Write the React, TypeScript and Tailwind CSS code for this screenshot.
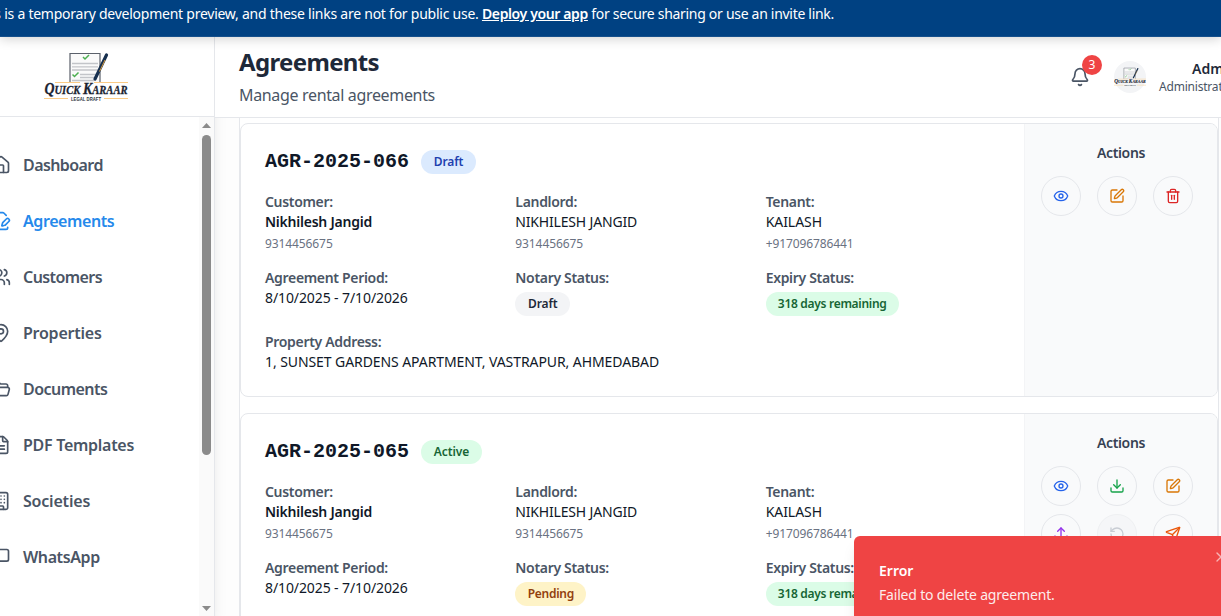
import React from "react";
import {
  House, FilePenLine, Users, MapPin, FolderOpen, FileText, Building, Bell, Eye, SquarePen, Trash2,
  Download, Upload, RotateCcw, Send, X,
} from "lucide-react";

function Logo({ className }: { className: string }) {
  return (
    <svg viewBox="0 0 84 50" className={className} fill="none">
      <path d="M26 30V1.500h30V30" fill="#fafafa" stroke="#5b616b" strokeWidth="1.2" />
      <path d="M28 11.5h26M28 14.8h26M28 18h26M36 22.5h18M36 25.5h16M28 28.5h22" stroke="#c3c5c9" strokeWidth="1.3" />
      <path d="M39 5l2 2 4-4M28.500 22.500l2 2 4-4" stroke="#4caf50" strokeWidth="1.5" />
      <path d="M62.500 3L51 27" stroke="#17304f" strokeWidth="3.200" strokeLinecap="round" />
      <path d="M61 8L55.500 19.500" stroke="#d99a3d" strokeWidth="1" />
      <path d="M11 30.500h25M50 30.500h34M0 46.500h24M60 46.500h24" stroke="#fbcb85" strokeWidth="1.1" />
      <text x="0.500" y="42" textLength="83" lengthAdjust="spacingAndGlyphs" fill="#1b2431" stroke="#1b2431" strokeWidth="0.3" fontFamily="Liberation Serif, serif" fontWeight="700" fontStyle="italic" fontSize="13">
        <tspan fontSize="17">Q</tspan>UICK <tspan fontSize="17">K</tspan>ARAAR
      </text>
      <text x="27" y="49" textLength="30" lengthAdjust="spacingAndGlyphs" fill="#30353d" fontFamily="Liberation Sans, sans-serif" fontWeight="700" fontSize="4.800">LEGAL DRAFT</text>
    </svg>
  );
}

function ChatIcon({ className }: { className?: string }) {
  return (
    <svg viewBox="0 0 24 24" fill="none" stroke="currentColor" strokeWidth="2" strokeLinecap="round" strokeLinejoin="round" className={className}>
      <path d="M21 15a2 2 0 0 1-2 2H7l-4 4V5a2 2 0 0 1 2-2h14a2 2 0 0 1 2 2z" />
    </svg>
  );
}

const nav = [
  { label: "Dashboard", Icon: House, track: "tracking-[-0.58px]" },
  { label: "Agreements", Icon: FilePenLine, track: "tracking-[-0.42px]", active: true },
  { label: "Customers", Icon: Users, track: "tracking-[-0.58px]" },
  { label: "Properties", Icon: MapPin, track: "tracking-[-0.24px]" },
  { label: "Documents", Icon: FolderOpen, track: "tracking-[-0.54px]" },
  { label: "PDF Templates", Icon: FileText, track: "tracking-[-0.28px]" },
  { label: "Societies", Icon: Building, track: "tracking-[-0.2px]" },
  { label: "WhatsApp", Icon: ChatIcon, track: "tracking-[-0.4px]" },
];

function Sidebar() {
  return (
    <aside className="relative z-10 flex w-[215px] shrink-0 flex-col border-r border-gray-200 bg-white shadow-lg">
      <div className="flex h-20 shrink-0 border-b border-gray-200 pl-11 pt-[15px]">
        <Logo className="h-[50px] w-[84px]" />
      </div>
      <div className="flex min-h-0 grow">
        <nav className="flex grow flex-col overflow-hidden pt-5">
          {nav.map(({ label, Icon, track, active }) => (
            <a key={label} className={`-ml-[9px] flex h-14 shrink-0 items-center gap-3 text-base font-semibold ${track} ${active ? "text-[#2589eb]" : "text-gray-600"}`}>
              <Icon className="size-5 shrink-0" />
              {label}
            </a>
          ))}
        </nav>
        <div className="flex w-[15px] flex-col items-center bg-[#fafafa] pb-[5px] pt-1.5">
          <svg className="h-[5px] w-[9px]" viewBox="0 0 9 5"><path d="M4.500 0L9 5H0z" fill="#8b8b8b" /></svg>
          <div className="mt-[7px] h-80 w-[9px] rounded-full bg-[#8b8b8b]" />
          <svg className="mt-auto h-[5px] w-[9px]" viewBox="0 0 9 5"><path d="M4.500 5L9 0H0z" fill="#8b8b8b" /></svg>
        </div>
      </div>
    </aside>
  );
}

function Pill({ className, children }: { className: string; children: React.ReactNode }) {
  return <span className={`flex h-6 items-center justify-center whitespace-nowrap rounded-full text-xs font-semibold ${className}`}>{children}</span>;
}

function Label({ className = "", children }: { className?: string; children: React.ReactNode }) {
  return <div className={`whitespace-nowrap text-sm font-semibold tracking-[-0.32px] text-gray-600 ${className}`}>{children}</div>;
}

type Action = { Icon: React.ElementType; color: string; disabled?: boolean };
type Agreement = { id: string; status: string; statusClass: string; notary: string; notaryClass: string; actions: Action[] };

const agreements: Agreement[] = [
  {
    id: "AGR-2025-066", status: "Draft", statusClass: "w-[55px] tracking-[-0.1px] bg-blue-100 text-[#1e40af]",
    notary: "Draft", notaryClass: "w-[55px] tracking-[-0.1px] bg-gray-100 text-gray-800",
    actions: [
      { Icon: Eye, color: "text-[#2563eb]" },
      { Icon: SquarePen, color: "text-[#d97706]" },
      { Icon: Trash2, color: "text-[#dc2626]" },
    ],
  },
  {
    id: "AGR-2025-065", status: "Active", statusClass: "w-[61px] tracking-[-0.05px] bg-green-100 text-[#166534]",
    notary: "Pending", notaryClass: "w-[71px] tracking-[-0.25px] bg-[#fef3c7] text-[#92400e]",
    actions: [
      { Icon: Eye, color: "text-[#2563eb]" },
      { Icon: Download, color: "text-[#16a34a]" },
      { Icon: SquarePen, color: "text-[#d97706]" },
      { Icon: Upload, color: "text-[#9333ea]" },
      { Icon: RotateCcw, color: "text-gray-400", disabled: true },
      { Icon: Send, color: "text-[#ea580c]" },
    ],
  },
];

function AgreementCard({ a }: { a: Agreement }) {
  return (
    <article className="flex h-[274px] shrink-0 overflow-hidden rounded-lg border border-gray-200 bg-white">
      <div className="w-[783px] p-6 text-sm text-gray-900">
        <div className="flex h-7 items-center gap-3">
          <h3 className="font-['Liberation_Mono',monospace] text-xl font-bold">{a.id}</h3>
          <Pill className={a.statusClass}>{a.status}</Pill>
        </div>
        <div className="mt-4 grid grid-cols-3 gap-4">
          <div>
            <Label>Customer:</Label>
            <div className="font-semibold tracking-[-0.24px]">Nikhilesh Jangid</div>
            <div className="mt-1 text-xs tracking-[-0.1px] text-gray-500">9314456675</div>
          </div>
          <div>
            <Label>Landlord:</Label>
            <div className="tracking-[-0.18px]">NIKHILESH JANGID</div>
            <div className="mt-1 text-xs tracking-[-0.1px] text-gray-500">9314456675</div>
          </div>
          <div>
            <Label>Tenant:</Label>
            <div className="tracking-[-0.05px]">KAILASH</div>
            <div className="mt-1 text-xs tracking-[-0.1px] text-gray-500">+917096786441</div>
          </div>
          <div>
            <Label>Agreement Period:</Label>
            <div className="tracking-[-0.1px]">8/10/2025 - 7/10/2026</div>
          </div>
          <div>
            <Label>Notary Status:</Label>
            <div className="mt-1 flex"><Pill className={a.notaryClass}>{a.notary}</Pill></div>
          </div>
          <div>
            <Label>Expiry Status:</Label>
            <div className="mt-1 flex"><Pill className="w-[133px] bg-green-100 tracking-[-0.3px] text-[#166534]">318 days remaining</Pill></div>
          </div>
        </div>
        <Label className="mt-4">Property Address:</Label>
        <div className="tracking-[-0.08px]">1, SUNSET GARDENS APARTMENT, VASTRAPUR, AHMEDABAD</div>
      </div>
      <div className="grow border-l border-gray-100 bg-gray-50 px-4 pt-[19px]">
        <h4 className="mb-[13px] text-center text-sm font-semibold tracking-[-0.35px] text-gray-700">Actions</h4>
        <div className="grid grid-cols-3 gap-2">
          {a.actions.map(({ Icon, color, disabled }, i) => (
            <button key={i} className={`flex size-10 items-center justify-center rounded-full border border-gray-200 ${color} ${disabled ? "bg-gray-100 opacity-50" : ""}`}>
              <Icon className="size-4" />
            </button>
          ))}
        </div>
      </div>
    </article>
  );
}

export default function App() {
  return (
    <div className="relative flex h-[616px] w-[1221px] flex-col overflow-hidden bg-white font-['Noto_Sans',sans-serif]">
      <div className="relative z-20 flex h-[37px] shrink-0 whitespace-pre border-b border-[#15508c] bg-[#004182] pt-1 text-sm text-white shadow-[0_2px_12px_rgba(0,0,0,0.18)]">
        <div className="-ml-[25px] tracking-[-0.246px]">This is a temporary development preview, and these links are not for public use. <a className="font-semibold tracking-[-0.37px] underline">Deploy your app</a><span className="tracking-[-0.295px]"> for secure sharing or use an invite link.</span></div>
      </div>
      <div className="flex min-h-0 grow">
        <Sidebar />
        <div className="flex min-w-0 grow flex-col">
          <header className="relative z-10 flex h-[81px] shrink-0 border-b border-gray-200 bg-white pl-6">
            <div className="grow pt-[9px]">
              <h1 className="text-2xl font-bold tracking-[-0.65px] text-gray-800">Agreements</h1>
              <p className="mt-[5px] text-base leading-6 tracking-[-0.34px] text-gray-600">Manage rental agreements</p>
            </div>
            <div className="relative mr-6 mt-[30px] size-5 text-gray-600">
              <Bell className="size-5" />
              <span className="absolute -top-3 left-3 flex size-5 items-center justify-center rounded-full bg-[#ef4444] text-xs text-white">3</span>
            </div>
            <div className="mt-6 flex size-8 items-center justify-center rounded-full bg-gray-100">
              <Logo className="h-5 w-8" />
            </div>
            <div className="mt-[23px] w-[75px] overflow-hidden whitespace-nowrap pl-[13px]">
              <div className="pl-[33px] text-sm font-semibold leading-[18px] text-gray-800">Admin</div>
              <div className="mt-px text-xs tracking-[-0.2px] text-gray-600">Administrator</div>
            </div>
          </header>
          <main className="min-h-0 grow overflow-hidden bg-[#fdfdfd] pl-6 pr-0.5">
            <div className="flex flex-col gap-4 border-x border-gray-200 bg-white pt-[5px]">
              {agreements.map((a) => <AgreementCard key={a.id} a={a} />)}
            </div>
          </main>
        </div>
      </div>
      <div className="absolute left-[854px] top-[536px] z-30 h-24 w-[390px] rounded-md bg-[#ef4444] pl-[25px] pt-[25px] text-sm text-white shadow-lg">
        <div className="font-semibold">Error</div>
        <div className="mt-1 tracking-[-0.18px] opacity-90">Failed to delete agreement.</div>
        <X className="absolute left-[359px] top-[13px] size-4 opacity-60" />
      </div>
    </div>
  );
}
